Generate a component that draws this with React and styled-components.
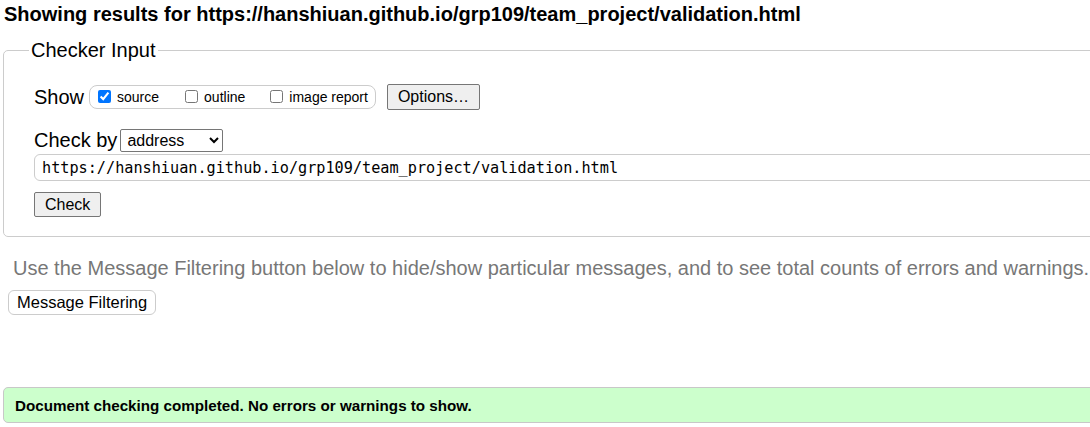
import React from 'react';
import styled, { createGlobalStyle } from 'styled-components';

const GlobalStyle = createGlobalStyle`
  html, body {
    margin: 0;
    padding: 0;
    background: #fff;
    overflow: hidden;
  }
  body {
    font-family: "Liberation Sans", Arial, sans-serif;
    color: #000;
  }
`;

const Page = styled.div`
  width: 1120px;
  display: flex;
  flex-direction: column;
`;

const Heading = styled.h2`
  margin: 3px 0 0 4px;
  font-size: 20px;
  line-height: 23px;
  font-weight: bold;
  color: #000;
`;

const CheckerSet = styled.fieldset`
  margin: 13px 0 0 3px;
  padding: 0 0 19px 30px;
  border: 1px solid #cccccc;
  border-radius: 5px;
  display: flex;
  flex-direction: column;
  align-items: flex-start;
`;

const Legend = styled.legend`
  margin-left: -5px;
  padding: 0 2px;
  font-size: 20px;
  line-height: 23px;
  color: #000;
`;

const Row = styled.div`
  display: flex;
  align-items: center;
  margin-top: ${p => p.$top || 0}px;
`;

const RowLabel = styled.span`
  font-size: 20px;
  line-height: 23px;
  margin-right: ${p => p.$gap || 6}px;
`;

const OptionGroup = styled.div`
  display: flex;
  align-items: center;
  height: 22px;
  padding: 0 7px 0 4px;
  border: 1px solid #cccccc;
  border-radius: 8px;
  margin-right: 11px;
`;

const Option = styled.label`
  display: flex;
  align-items: center;
  font-size: 14px;
  margin-right: ${p => p.$gap || 0}px;
`;

const Box = styled.input`
  width: 13px;
  height: 13px;
  margin: 0 6px 2px 4px;
`;

const NativeButton = styled.button`
  font-family: "Liberation Sans", Arial, sans-serif;
  font-size: 16px;
  height: ${p => p.$h || 25}px;
  padding: 0 10px;
  background: #efefef;
  border: 1px solid #767676;
  border-radius: 2px;
  color: #000;
`;

const Select = styled.select`
  font-family: "Liberation Sans", Arial, sans-serif;
  font-size: 16px;
  width: 103px;
  height: 23px;
  padding: 0 2px;
  border: 1px solid #767676;
  border-radius: 2px;
  background: #fff;
  color: #000;
`;

const UrlInput = styled.input`
  margin-top: 2px;
  width: 1100px;
  height: 27px;
  box-sizing: border-box;
  padding: 0 7px;
  border: 1px solid #cccccc;
  border-radius: 6px;
  font-family: "DejaVu Sans Mono", "Liberation Mono", monospace;
  font-size: 15.2px;
  color: #000;
`;

const Hint = styled.p`
  margin: 20px 0 0 13px;
  font-size: 20px;
  line-height: 23px;
  color: #777777;
  white-space: nowrap;
`;

const FilterButton = styled.button`
  align-self: flex-start;
  margin: 10px 0 0 8px;
  height: 25px;
  padding: 0 8px;
  font-family: "Liberation Sans", Arial, sans-serif;
  font-size: 16.5px;
  background: #fff;
  border: 1px solid #cccccc;
  border-radius: 6px;
  color: #000;
`;

const Success = styled.div`
  margin: 72px 0 0 3px;
  height: 36px;
  box-sizing: border-box;
  display: flex;
  align-items: center;
  padding-left: 11px;
  background: #ccffcc;
  border: 1px solid #c8c8c8;
  border-radius: 5px;
  font-size: 15.2px;
  font-weight: bold;
`;

export default function App() {
  const url = 'https://hanshiuan.github.io/grp109/team_project/validation.html';
  return (
    <Page>
      <GlobalStyle />
      <Heading>Showing results for {url}</Heading>
      <CheckerSet>
        <Legend>Checker Input</Legend>
        <Row $top={22}>
          <RowLabel $gap={5}>Show</RowLabel>
          <OptionGroup>
            <Option $gap={22}><Box type="checkbox" defaultChecked />source</Option>
            <Option $gap={21}><Box type="checkbox" />outline</Option>
            <Option><Box type="checkbox" />image report</Option>
          </OptionGroup>
          <NativeButton $h={26}>Options…</NativeButton>
        </Row>
        <Row $top={19}>
          <RowLabel $gap={3}>Check by</RowLabel>
          <Select defaultValue="address">
            <option value="address">address</option>
            <option value="upload">file upload</option>
            <option value="input">text input</option>
          </Select>
        </Row>
        <UrlInput defaultValue={url} />
        <Row $top={11}>
          <NativeButton>Check</NativeButton>
        </Row>
      </CheckerSet>
      <Hint>Use the Message Filtering button below to hide/show particular messages, and to see total counts of errors and warnings.</Hint>
      <FilterButton>Message Filtering</FilterButton>
      <Success>Document checking completed. No errors or warnings to show.</Success>
    </Page>
  );
}
